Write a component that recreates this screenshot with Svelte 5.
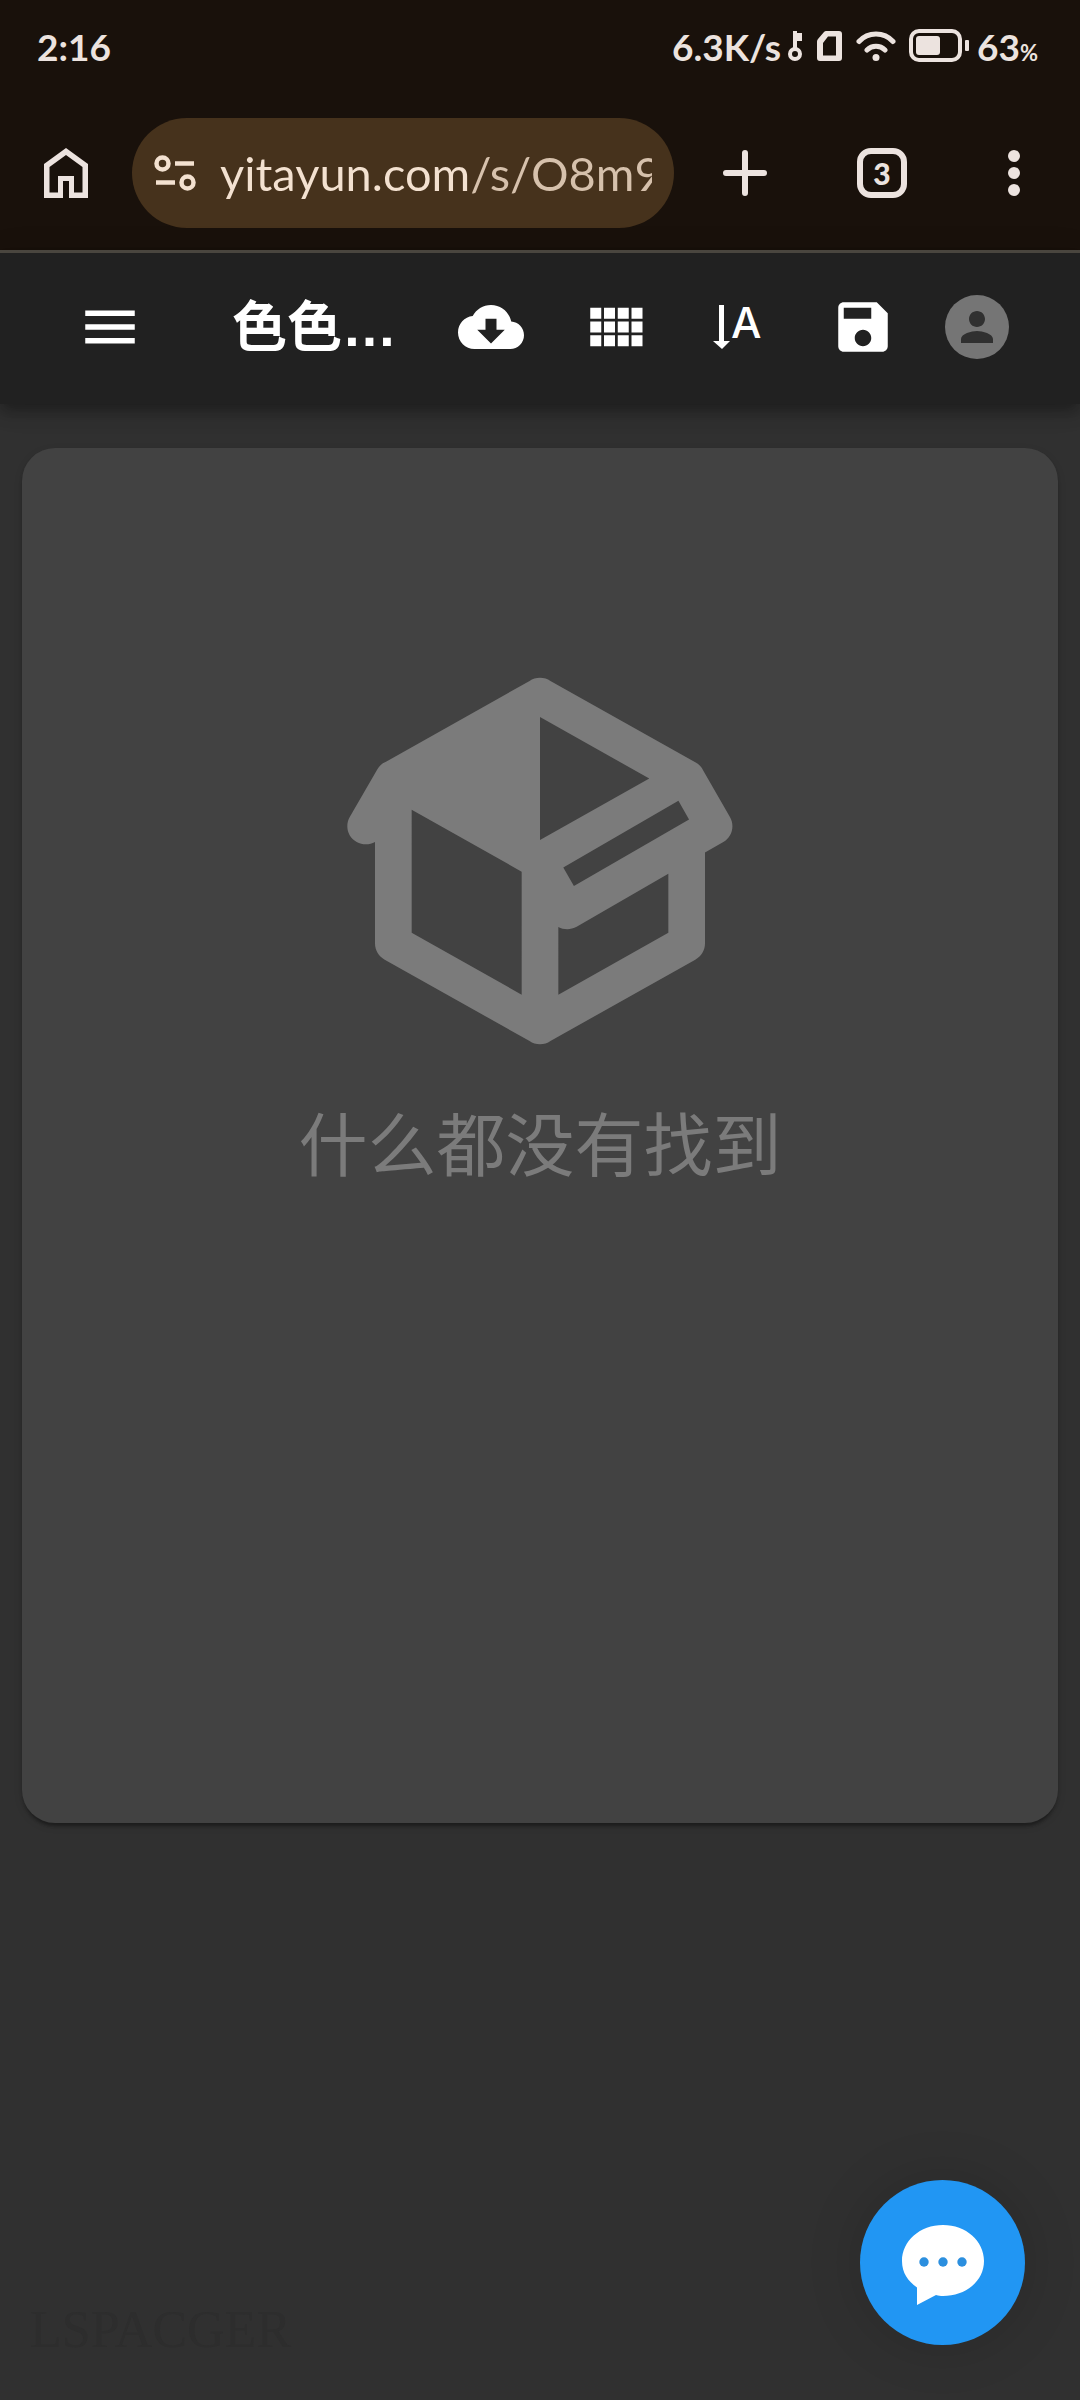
<script lang="ts">
  let url = $state('yitayun.com/s/O8m9');
  let tabCount = $state(3);
  const battery = 63;
</script>

<div class="screen">
  <header class="browser">
    <div class="status">
      <span class="clock">2:16</span>
      <div class="status-right">
        <span>6.3K/s</span>
        <svg class="key" width="16" height="32" viewBox="0 0 16 32" aria-hidden="true">
          <circle cx="8" cy="24" r="5" fill="none" stroke="currentColor" stroke-width="4" />
          <path d="M6 1h4v2h5v8h-5v8H6z" fill="currentColor" />
        </svg>
        <svg class="sim" width="26" height="32" viewBox="0 0 26 32" aria-hidden="true">
          <path
            fill="currentColor"
            fill-rule="evenodd"
            d="M10 1h13a3 3 0 0 1 3 3v24a3 3 0 0 1-3 3H4a3 3 0 0 1-3-3V11.500q0-1.500 1-2.500l6-7q1-1 2-1zM12 6.500L7 13v12.500h13V6.500z"
          />
        </svg>
        <svg class="wifi" width="40" height="32" viewBox="0 0 40 32" aria-hidden="true">
          <path
            d="M3 11.500C12 1.500 28 1.500 37 11.500M11 20c5-5 13-5 18 0"
            fill="none"
            stroke="currentColor"
            stroke-width="5"
            stroke-linecap="round"
          />
          <circle cx="20" cy="27.500" r="3.500" fill="currentColor" />
        </svg>
        <svg class="battery" width="60" height="34" viewBox="0 0 60 34" aria-hidden="true">
          <rect x="2" y="2" width="49" height="29" rx="8" fill="none" stroke="currentColor" stroke-width="4" />
          <rect x="7" y="7" width="24" height="19" rx="3" fill="currentColor" />
          <rect x="56" y="11" width="4" height="11" rx="1" fill="currentColor" />
        </svg>
        <span>{battery}<small>%</small></span>
      </div>
    </div>

    <div class="toolbar">
      <button class="tool" aria-label="Home">
        <svg width="44" height="50" viewBox="0 0 44 50" fill="currentColor">
          <path
            fill-rule="evenodd"
            d="M22 0l22 16v34H25V33h-6v17H0V16zM22 7L5.500 19v25.500H14V28h16v16.500h8.500V19z"
          />
        </svg>
      </button>

      <div class="omnibox">
        <svg width="42" height="36" viewBox="0 0 42 36" fill="none" stroke="currentColor" stroke-width="4.500" aria-hidden="true">
          <circle cx="8.500" cy="8.500" r="6" />
          <path d="M21 8.500h19M2 27.500h19" />
          <circle cx="33.500" cy="27.500" r="6" />
        </svg>
        <input type="text" aria-label="Address" bind:value={url} />
      </div>

      <button class="tool new-tab" aria-label="New tab" onclick={() => tabCount++}>
        <svg width="46" height="46" viewBox="0 0 46 46" stroke="currentColor" stroke-width="6" stroke-linecap="round">
          <path d="M23 3v40M4 23h38" />
        </svg>
      </button>
      <button class="tool" aria-label="Switch tabs">
        <span class="tabs">{tabCount}</span>
      </button>
      <button class="tool" aria-label="More options">
        <svg width="12" height="46" viewBox="0 0 12 46" fill="currentColor">
          <circle cx="6" cy="6" r="6" />
          <circle cx="6" cy="23" r="6" />
          <circle cx="6" cy="40" r="6" />
        </svg>
      </button>
    </div>
  </header>

  <nav class="app-bar">
    <button class="menu" aria-label="Menu">
      <svg class="icon" viewBox="0 0 24 24">
        <path d="M3 18h18v-2H3v2zm0-5h18v-2H3v2zm0-7v2h18V6H3z" />
      </svg>
    </button>
    <h1>色色…</h1>
    <div class="actions">
      <button aria-label="Download">
        <svg class="icon" viewBox="0 0 24 24">
          <path
            d="M19.350 10.040C18.670 6.590 15.640 4 12 4 9.110 4 6.600 5.640 5.350 8.040 2.340 8.360 0 10.910 0 14c0 3.310 2.690 6 6 6h13c2.760 0 5-2.240 5-5 0-2.640-2.050-4.780-4.650-4.960zM17 13l-5 5-5-5h3V9h4v4h3z"
          />
        </svg>
      </button>
      <button aria-label="Change view">
        <svg class="icon" viewBox="0 0 24 24">
          <path
            d="M3 9h4V5H3v4zm0 5h4v-4H3v4zm5 0h4v-4H8v4zm5 0h4v-4h-4v4zM8 9h4V5H8v4zm5-4v4h4V5h-4zm5 9h4v-4h-4v4zM3 19h4v-4H3v4zm5 0h4v-4H8v4zm5 0h4v-4h-4v4zm5 0h4v-4h-4v4zm0-14v4h4V5h-4z"
          />
        </svg>
      </button>
      <button aria-label="Sort">
        <svg class="icon" viewBox="0 0 66 66">
          <path d="M13 11h5v36h6l-8 8-9-8h6z" />
          <text x="25" y="44" class="letter">A</text>
        </svg>
      </button>
      <button aria-label="Save">
        <svg class="icon" viewBox="0 0 24 24">
          <path
            d="M17 3H5c-1.110 0-2 .9-2 2v14c0 1.100.89 2 2 2h14c1.100 0 2-.9 2-2V7l-4-4zm-5 16c-1.660 0-3-1.340-3-3s1.340-3 3-3 3 1.340 3 3-1.340 3-3 3zm3-10H5V5h10v4z"
          />
        </svg>
      </button>
    </div>
    <button class="avatar" aria-label="Account">
      <svg width="48" height="48" viewBox="0 0 24 24" fill="currentColor">
        <path
          d="M12 12c2.210 0 4-1.790 4-4s-1.790-4-4-4-4 1.790-4 4 1.790 4 4 4zm0 2c-2.670 0-8 1.340-8 4v2h16v-2c0-2.660-5.330-4-8-4z"
        />
      </svg>
    </button>
  </nav>

  <main>
    <section class="card">
      <!-- Empty state -->
      <svg class="box" viewBox="0 0 24 24" aria-hidden="true">
        <path
          d="M2,10.96C1.5,10.68 1.35,10.07 1.63,9.59L3.13,7C3.24,6.8 3.41,6.66 3.6,6.58L11.43,2.18C11.59,2.06 11.79,2 12,2C12.21,2 12.41,2.06 12.57,2.18L20.47,6.62C20.66,6.72 20.82,6.88 20.91,7.08L22.36,9.6C22.64,10.08 22.47,10.69 22,10.96L21,11.54V16.5C21,16.88 20.79,17.21 20.47,17.38L12.57,21.82C12.41,21.94 12.21,22 12,22C11.79,22 11.59,21.94 11.43,21.82L3.53,17.38C3.21,17.21 3,16.88 3,16.5V10.96C2.7,11.13 2.32,11.14 2,10.96M12,4.15V4.15L12,10.85V10.85L17.96,7.5L12,4.15M5,15.91L11,19.29V12.58L5,9.21V15.91M19,15.91V12.69L14,15.59C13.67,15.77 13.3,15.76 13,15.6V19.29L19,15.91M13.85,13.36L20.13,9.73L19.55,8.72L13.27,12.35L13.85,13.36Z"
        />
      </svg>
      <p>什么都没有找到</p>
    </section>
  </main>

  <footer>LSPACGER</footer>

  <button class="chat" aria-label="Chat">
    <svg width="84" height="84" viewBox="0 0 84 84">
      <path
        fill="#fff"
        d="M42 4C19 4 1 20 1 40c0 12 6 20 15 26.500V84l19-10c3 .7 4 1 7 1 23 0 41-15 41-35S65 4 42 4z"
      />
      <g fill="#2b8fdf">
        <circle cx="23" cy="41" r="4.700" />
        <circle cx="42" cy="41" r="4.700" />
        <circle cx="61" cy="41" r="4.700" />
      </g>
    </svg>
  </button>
</div>

<style>
  :global(body) {
    background: #303030;
  }

  .screen {
    display: flex;
    flex-direction: column;
    min-height: 100vh;
    font-family: Lato, 'Noto Sans CJK SC', sans-serif;
  }

  button {
    display: flex;
    align-items: center;
    justify-content: center;
    padding: 0;
    border: 0;
    background: none;
    color: inherit;
    font: inherit;
    cursor: pointer;
  }

  .browser {
    background: #19110b;
    color: #ece3df;
  }

  .status {
    display: flex;
    align-items: center;
    justify-content: space-between;
    height: 92px;
    padding: 0 42px 0 37px;
    font-size: 37px;
    font-weight: 700;
  }

  .status-right {
    display: flex;
    align-items: center;
  }

  .status small {
    font-size: 22px;
  }

  .key {
    margin: 0 13px 0 6px;
  }

  .wifi {
    margin: 0 13px 0 14px;
  }

  .battery {
    margin-right: 8px;
  }

  .toolbar {
    display: flex;
    align-items: center;
    padding: 26px 0 22px;
  }

  .tool {
    flex: none;
    width: 132px;
    height: 110px;
  }

  .new-tab {
    width: 142px;
  }

  .tabs {
    display: flex;
    align-items: center;
    justify-content: center;
    box-sizing: border-box;
    width: 50px;
    height: 50px;
    border: 6px solid currentColor;
    border-radius: 14px;
    font-size: 30px;
    font-weight: 900;
    line-height: 1;
  }

  .omnibox {
    display: flex;
    flex: 1;
    align-items: center;
    gap: 24px;
    min-width: 0;
    height: 110px;
    box-sizing: border-box;
    padding: 0 22px;
    border-radius: 55px;
    background: #46321c;
    color: #f3e1d0;
  }

  .omnibox svg {
    flex: none;
  }

  .omnibox input {
    flex: 1;
    min-width: 0;
    height: 66px;
    padding: 0;
    border: 0;
    outline: 0;
    /* host is brighter than the path */
    background: linear-gradient(90deg, #f3e1d0 250px, #d6c1ac 250px);
    background-clip: text;
    color: transparent;
    font: 47px Lato, sans-serif;
  }

  .app-bar {
    position: relative;
    display: flex;
    align-items: center;
    box-sizing: border-box;
    height: 154px;
    padding: 0 71px 3px 44px;
    border-top: 3px solid #4a463f;
    background: #212121;
    color: #fff;
    box-shadow:
      0 6px 11px -3px rgba(0, 0, 0, 0.2),
      0 11px 14px rgba(0, 0, 0, 0.14),
      0 3px 28px rgba(0, 0, 0, 0.12);
  }

  .menu {
    width: 132px;
    height: 132px;
  }

  h1 {
    flex: 1;
    min-width: 0;
    margin: 0 0 0 56px;
    overflow: hidden;
    font-family: 'Liberation Sans', 'Noto Sans CJK SC', sans-serif;
    font-size: 55px;
    font-weight: 700;
    line-height: 88px;
    white-space: nowrap;
  }

  .actions {
    display: flex;
    gap: 58px;
    margin-right: 49px;
  }

  .icon {
    display: block;
    width: 66px;
    height: 66px;
    fill: currentColor;
  }

  .letter {
    font-family: Inter, sans-serif;
    font-size: 43px;
    font-weight: 500;
  }

  .avatar {
    width: 64px;
    height: 64px;
    border-radius: 50%;
    background: #757575;
    color: #303030;
  }

  main {
    flex: 1;
    padding: 44px 22px;
  }

  .card {
    display: flex;
    flex-direction: column;
    align-items: center;
    box-sizing: border-box;
    min-height: 1375px;
    padding: 193px 22px 44px;
    border-radius: 33px;
    background: #424242;
    color: #7b7b7b;
    box-shadow:
      0 6px 3px -3px rgba(0, 0, 0, 0.2),
      0 3px 3px rgba(0, 0, 0, 0.14),
      0 3px 8px rgba(0, 0, 0, 0.12);
  }

  .box {
    width: 440px;
    height: 440px;
    fill: currentColor;
  }

  .card p {
    margin: 10px 0 0;
    font-family: 'Noto Sans CJK SC', sans-serif;
    font-size: 69px;
    line-height: 100px;
  }

  footer {
    padding: 0 30px 40px;
    color: #2d2d2d;
    font-family: 'Liberation Serif', serif;
    font-size: 52px;
    line-height: 60px;
  }

  .chat {
    position: fixed;
    right: 55px;
    bottom: 55px;
    width: 165px;
    height: 165px;
    border-radius: 50%;
    background: #2196f3;
    box-shadow: 0 0 55px rgba(0, 0, 0, 0.15);
  }
</style>
